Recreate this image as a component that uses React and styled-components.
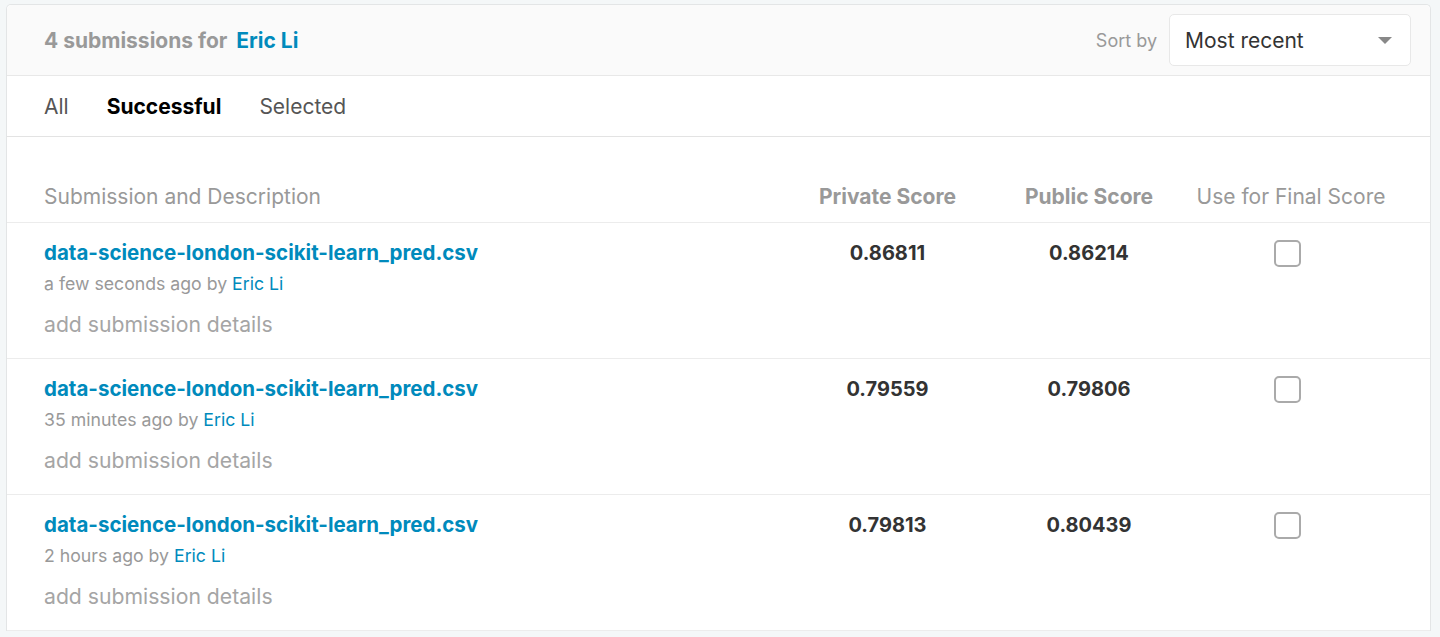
import React from 'react'
import styled, { createGlobalStyle } from 'styled-components'

const GlobalStyle = createGlobalStyle`
    body {
        margin: 0;
        background: #f4f7f8;
        font-family: Inter, "Open Sans", "Liberation Sans", sans-serif;
    }
`

const Page = styled.div`
    padding: 4px 9px 0 6px;
`

const Card = styled.div`
    background: white;
    border: 1px solid #e3e5e6;
    border-bottom: none;
    border-radius: 5px 5px 0 0;
`

const Header = styled.div`
    display: flex;
    align-items: center;
    justify-content: space-between;
    height: 70px;
    padding: 0 19px 0 37px;
    background: #fafafa;
    border-bottom: 1px solid #e8e8e8;
    border-radius: 5px 5px 0 0;
`

const Title = styled.h2`
    margin: 0;
    font-size: 21px;
    font-weight: 700;
    color: #999;
`

const Blue = styled.span`
    color: #008abc;
    font-weight: ${props => props.bold ? 700 : 400};
    margin-left: ${props => props.gap || 0}px;
`

const SortBox = styled.div`
    display: flex;
    align-items: center;
    gap: 12px;
`

const SortLabel = styled.span`
    font-size: 18px;
    color: #999;
`

const Select = styled.div`
    display: flex;
    align-items: center;
    justify-content: space-between;
    width: 242px;
    height: 52px;
    box-sizing: border-box;
    padding: 0 18px 0 15px;
    background: white;
    border: 1px solid #e8e8e8;
    border-radius: 5px;
    font-size: 21px;
    color: #333;
`

const Caret = styled.span`
    width: 0;
    height: 0;
    border-left: 7px solid transparent;
    border-right: 7px solid transparent;
    border-top: 7px solid #888;
`

const Tabs = styled.div`
    display: flex;
    align-items: center;
    gap: 38px;
    height: 60px;
    padding: 0 37px;
    border-bottom: 1px solid #e3e3e3;
`

const Tab = styled.span`
    font-size: 21px;
    color: ${props => props.active ? '#000' : '#555'};
    font-weight: ${props => props.active ? 700 : 400};
`

const Grid = styled.div`
    display: grid;
    grid-template-columns: 1fr 200px 200px 204px;
    align-items: start;
    padding: 0 37px;
    border-bottom: 1px solid #ececec;
`

const HeadRow = styled(Grid)`
    height: 86px;
    box-sizing: border-box;
    padding-top: 48px;
`

const HeadCell = styled.div`
    font-size: 21px;
    line-height: 24px;
    color: #999;
    text-align: ${props => props.left ? 'left' : 'center'};
    font-weight: ${props => props.bold ? 700 : 400};
    padding-right: ${props => props.shift || 0}px;
`

const Row = styled(Grid)`
    height: 136px;
    box-sizing: border-box;
    padding-top: 18px;
`

const Info = styled.div`
    display: flex;
    flex-direction: column;
`

const FileName = styled.a`
    font-size: 20.5px;
    line-height: 24px;
    font-weight: 700;
    color: #008abc;
    text-decoration: none;
`

const Meta = styled.span`
    margin-top: 8px;
    font-size: 17.7px;
    line-height: 22px;
    color: #999;
`

const Details = styled.span`
    margin-top: 17px;
    font-size: 21.2px;
    line-height: 24px;
    color: #a5a5a5;
`

const Score = styled.div`
    font-size: 20px;
    line-height: 24px;
    font-weight: 700;
    color: #333;
    text-align: center;
    padding-right: ${props => props.shift || 0}px;
`

const CheckCell = styled.div`
    display: flex;
    justify-content: center;
    padding-right: 8px;
`

const Checkbox = styled.span`
    display: block;
    width: 27px;
    height: 27px;
    box-sizing: border-box;
    margin-top: -1px;
    border: 2px solid #aaa;
    border-radius: 5px;
    background: white;
`

const submissions = [
    { when: 'a few seconds ago', priv: '0.86811', pub: '0.86214' },
    { when: '35 minutes ago', priv: '0.79559', pub: '0.79806' },
    { when: '2 hours ago', priv: '0.79813', pub: '0.80439' },
]

export default function App() {
    return (
        <React.Fragment>
            <GlobalStyle />
            <Page>
                <Card>
                    <Header>
                        <Title>4 submissions for<Blue bold gap={9}>Eric Li</Blue></Title>
                        <SortBox>
                            <SortLabel>Sort by</SortLabel>
                            <Select>
                                Most recent
                                <Caret />
                            </Select>
                        </SortBox>
                    </Header>
                    <Tabs>
                        <Tab>All</Tab>
                        <Tab active>Successful</Tab>
                        <Tab>Selected</Tab>
                    </Tabs>
                    <HeadRow>
                        <HeadCell left>Submission and Description</HeadCell>
                        <HeadCell bold shift={3}>Private Score</HeadCell>
                        <HeadCell bold>Public Score</HeadCell>
                        <HeadCell>Use for Final Score</HeadCell>
                    </HeadRow>
                    {submissions.map((sub, i) => (
                        <Row key={i}>
                            <Info>
                                <FileName href="#">data-science-london-scikit-learn_pred.csv</FileName>
                                <Meta>{sub.when} by <Blue>Eric Li</Blue></Meta>
                                <Details>add submission details</Details>
                            </Info>
                            <Score shift={3}>{sub.priv}</Score>
                            <Score>{sub.pub}</Score>
                            <CheckCell><Checkbox /></CheckCell>
                        </Row>
                    ))}
                </Card>
            </Page>
        </React.Fragment>
    )
}
